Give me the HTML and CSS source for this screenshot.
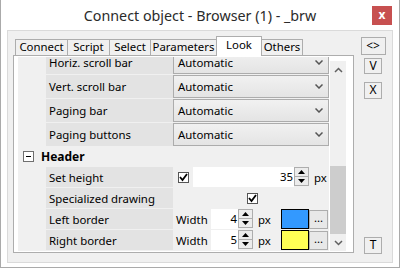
FILE: index.html
```html
<!DOCTYPE html>
<html lang="en">
<head>
  <meta charset="UTF-8">
  <title>Connect object - Browser (1) - _brw</title>
  <link rel="stylesheet" href="styles.css">
</head>
<body>
  <div class="window">
    <div class="titlebar">
      <span class="title">Connect object - Browser (1) - _brw</span>
      <div class="close">x</div>
    </div>

    <div class="frame">
      <div class="main">
        <div class="tabs">
          <div class="tab w-connect">Connect</div>
          <div class="tab w-script">Script</div>
          <div class="tab w-select">Select</div>
          <div class="tab w-params">Parameters</div>
          <div class="tab tab-active w-look">Look</div>
          <div class="tab w-others">Others</div>
        </div>

        <div class="panel">
          <div class="grid">
            <div class="rows">
              <div class="row row-combo">
                <div class="gutter"></div>
                <div class="label">Horiz. scroll bar</div>
                <div class="value"><div class="combo">Automatic<svg class="chev" width="8" height="5" viewBox="0 0 8 5"><polyline points="0.5,0.5 4,4 7.5,0.5" /></svg></div></div>
              </div>
              <div class="row row-combo">
                <div class="gutter"></div>
                <div class="label">Vert. scroll bar</div>
                <div class="value"><div class="combo">Automatic<svg class="chev" width="8" height="5" viewBox="0 0 8 5"><polyline points="0.5,0.5 4,4 7.5,0.5" /></svg></div></div>
              </div>
              <div class="row row-combo">
                <div class="gutter"></div>
                <div class="label">Paging bar</div>
                <div class="value"><div class="combo">Automatic<svg class="chev" width="8" height="5" viewBox="0 0 8 5"><polyline points="0.5,0.5 4,4 7.5,0.5" /></svg></div></div>
              </div>
              <div class="row row-combo">
                <div class="gutter"></div>
                <div class="label">Paging buttons</div>
                <div class="value"><div class="combo">Automatic<svg class="chev" width="8" height="5" viewBox="0 0 8 5"><polyline points="0.5,0.5 4,4 7.5,0.5" /></svg></div></div>
              </div>

              <div class="row row-group">
                <div class="expander"><span class="minus"></span></div>
                <div class="group-title">Header</div>
              </div>

              <div class="row row-prop">
                <div class="gutter"></div>
                <div class="label">Set height</div>
                <div class="value value-height">
                  <div class="check"><svg width="9" height="9" viewBox="0 0 9 9"><polyline points="1,4 3.5,7 8,1" /></svg></div>
                  <div class="input input-wide">35</div>
                  <div class="spin">
                    <div class="spin-btn"><svg width="7" height="4" viewBox="0 0 7 4"><polygon points="0,4 3.5,0 7,4" /></svg></div>
                    <div class="spin-btn"><svg width="7" height="4" viewBox="0 0 7 4"><polygon points="0,0 3.5,4 7,0" /></svg></div>
                  </div>
                  <span class="unit">px</span>
                </div>
              </div>
              <div class="row row-prop">
                <div class="gutter"></div>
                <div class="label">Specialized drawing</div>
                <div class="value value-center">
                  <div class="check"><svg width="9" height="9" viewBox="0 0 9 9"><polyline points="1,4 3.5,7 8,1" /></svg></div>
                </div>
              </div>
              <div class="row row-prop">
                <div class="gutter"></div>
                <div class="label">Left border</div>
                <div class="value value-border">
                  <span class="field-name">Width</span>
                  <div class="input input-small">4</div>
                  <div class="spin">
                    <div class="spin-btn"><svg width="7" height="4" viewBox="0 0 7 4"><polygon points="0,4 3.5,0 7,4" /></svg></div>
                    <div class="spin-btn"><svg width="7" height="4" viewBox="0 0 7 4"><polygon points="0,0 3.5,4 7,0" /></svg></div>
                  </div>
                  <span class="unit unit-border">px</span>
                  <div class="swatch swatch-blue"></div>
                  <div class="dots">...</div>
                </div>
              </div>
              <div class="row row-prop">
                <div class="gutter"></div>
                <div class="label">Right border</div>
                <div class="value value-border">
                  <span class="field-name">Width</span>
                  <div class="input input-small">5</div>
                  <div class="spin">
                    <div class="spin-btn"><svg width="7" height="4" viewBox="0 0 7 4"><polygon points="0,4 3.5,0 7,4" /></svg></div>
                    <div class="spin-btn"><svg width="7" height="4" viewBox="0 0 7 4"><polygon points="0,0 3.5,4 7,0" /></svg></div>
                  </div>
                  <span class="unit unit-border">px</span>
                  <div class="swatch swatch-yellow"></div>
                  <div class="dots">...</div>
                </div>
              </div>
            </div>
          </div>

          <div class="vscroll">
            <div class="sb-arrow sb-up"><svg width="9" height="6" viewBox="0 0 9 6"><polyline points="1,5 4.5,1.5 8,5" /></svg></div>
            <div class="sb-track"><div class="sb-thumb"></div></div>
            <div class="sb-arrow sb-down"><svg width="9" height="6" viewBox="0 0 9 6"><polyline points="1,1 4.5,4.5 8,1" /></svg></div>
          </div>
        </div>
      </div>

      <div class="side">
        <div class="side-btn side-wide">&lt;&gt;</div>
        <div class="side-btn side-v">V</div>
        <div class="side-btn side-x">X</div>
        <div class="side-btn side-t">T</div>
      </div>
    </div>
  </div>
</body>
</html>
```

FILE: styles.css
```css
* {
  margin: 0;
  padding: 0;
  box-sizing: border-box;
}

body {
  width: 400px;
  height: 268px;
  overflow: hidden;
  background: #ffffff;
  font-family: "Noto Sans", "Open Sans", sans-serif;
  font-size: 11.4px;
  color: #000;
}

.window {
  width: 400px;
  height: 268px;
  background: #fff;
  border-left: 1px solid #aaaaaa;
  border-right: 1px solid #aaaaaa;
  border-bottom: 1px solid #aaaaaa;
  position: relative;
}

/* title bar */
.titlebar {
  height: 30px;
  display: flex;
  align-items: center;
  justify-content: center;
}

.title {
  font-size: 14.3px;
  color: #2b2b2b;
  padding-top: 1px;
}

.close {
  position: absolute;
  top: 6px;
  left: 371px;
  width: 20px;
  height: 19px;
  background: #c75050;
  color: #fff;
  font-weight: 700;
  font-size: 12px;
  line-height: 17px;
  text-align: center;
}

/* group frame */
.frame {
  margin-left: 6px;
  width: 386px;
  height: 233px;
  border: 1px solid #dadada;
  background: #f0f0f0;
  display: flex;
  padding: 5px 0 8px 5px;
}

.main {
  width: 341px;
  display: flex;
  flex-direction: column;
}

/* tabs */
.tabs {
  height: 19px;
  display: flex;
  align-items: flex-end;
  padding-left: 2px;
}

.tab {
  height: 16px;
  border: 1px solid #adadad;
  border-bottom: none;
  background: #f0f0f0;
  text-align: center;
  line-height: 14px;
  margin-left: -1px;
}

.tab:first-child {
  margin-left: 0;
}

.tab-active {
  height: 20px;
  margin-bottom: -1px;
  background: #fff;
  position: relative;
  z-index: 1;
  line-height: 15px;
}

.w-connect { width: 53px; }
.w-script { width: 43px; }
.w-select { width: 42px; }
.w-params { width: 67px; }
.w-look { width: 46px; }
.w-others { width: 42px; }

/* property panel */
.panel {
  height: 198px;
  border: 1px solid #adadad;
  background: #fff;
  display: flex;
  gap: 1px;
  padding: 1px 7px 1px 4px;
}

.grid {
  width: 311px;
  height: 194px;
  overflow: hidden;
  background: #f0f0f0;
}

.rows {
  margin-top: -6px;
}

.row {
  display: flex;
  margin-bottom: 1px;
}

.row-combo {
  height: 23px;
}

.row-prop {
  height: 20px;
}

.row-group {
  height: 20px;
  margin-bottom: 0;
  align-items: center;
}

.gutter {
  width: 28px;
}

.label {
  width: 127px;
  background: #e3e3e3;
  padding-left: 3px;
  display: flex;
  align-items: center;
  white-space: nowrap;
}

.value {
  width: 156px;
  display: flex;
  align-items: center;
}

.combo {
  width: 156px;
  height: 23px;
  border: 1px solid #acacac;
  background: linear-gradient(#f1f1f1, #e4e4e4);
  display: flex;
  align-items: center;
  justify-content: space-between;
  padding: 0 5px 0 4px;
}

.chev polyline {
  fill: none;
  stroke: #555;
  stroke-width: 1.5;
}

/* group header */
.expander {
  width: 11px;
  height: 11px;
  margin-left: 5px;
  margin-top: -2px;
  border: 1px solid #6f6f6f;
  background: #fff;
  display: flex;
  align-items: center;
  justify-content: center;
}

.minus {
  width: 5px;
  height: 1px;
  background: #000;
}

.group-title {
  font-weight: 700;
  font-size: 12px;
  margin-left: 7px;
  margin-top: -2px;
}

/* editors */
.check {
  width: 11px;
  height: 11px;
  border: 1px solid #555;
  background: #fff;
  display: flex;
  align-items: center;
  justify-content: center;
}

.check polyline {
  fill: none;
  stroke: #000;
  stroke-width: 1.8;
}

.value-height {
  padding-left: 5px;
}

.value-height .check {
  margin-right: 4px;
}

.value-center {
  justify-content: center;
  padding-left: 3px;
}

.input {
  height: 20px;
  background: #fff;
  text-align: right;
  line-height: 20px;
  padding-right: 1px;
}

.input-wide {
  width: 101px;
}

.input-small {
  width: 27px;
}

.spin {
  width: 15px;
  height: 20px;
  display: flex;
  flex-direction: column;
}

.spin-btn {
  height: 10px;
  border: 1px solid #adadad;
  background: #ececec;
  display: flex;
  align-items: center;
  justify-content: center;
}

.spin-btn + .spin-btn {
  border-top: none;
  height: 9px;
}

.spin-btn polygon {
  fill: #000;
}

.unit {
  margin-left: 5px;
}

.value-border {
  padding-left: 3px;
}

.field-name {
  width: 35px;
}

.unit-border {
  width: 23px;
}

.swatch {
  width: 28px;
  height: 20px;
  border: 1px solid #000;
}

.swatch-blue {
  background: #3399ff;
}

.swatch-yellow {
  background: #ffff55;
}

.dots {
  width: 19px;
  height: 19px;
  border: 1px solid #adadad;
  background: #e8e8e8;
  text-align: center;
  line-height: 14px;
}

/* scrollbar */
.vscroll {
  width: 16px;
  height: 190px;
  margin-top: 4px;
  background: #f0f0f0;
  display: flex;
  flex-direction: column;
}

.sb-arrow {
  height: 17px;
  display: flex;
  align-items: center;
  justify-content: center;
}

.sb-arrow polyline {
  fill: none;
  stroke: #606060;
  stroke-width: 1.5;
}

.sb-track {
  flex: 1;
  display: flex;
  flex-direction: column;
  justify-content: flex-end;
}

.sb-thumb {
  height: 68px;
  background: #cdcdcd;
}

/* side buttons */
.side {
  flex: 1;
  display: flex;
  flex-direction: column;
  align-items: center;
  padding-top: 1px;
}

.side-btn {
  border: 1px solid #adadad;
  background: #f0f0f0;
  text-align: center;
  font-size: 12px;
}

.side-wide {
  width: 25px;
  height: 18px;
  line-height: 15px;
}

.side-v, .side-x, .side-t {
  width: 18px;
  height: 16px;
  line-height: 14px;
}

.side-v {
  margin-top: 3px;
}

.side-x {
  margin-top: 8px;
  height: 17px;
}

.side-t {
  margin-top: auto;
  height: 17px;
}
```
